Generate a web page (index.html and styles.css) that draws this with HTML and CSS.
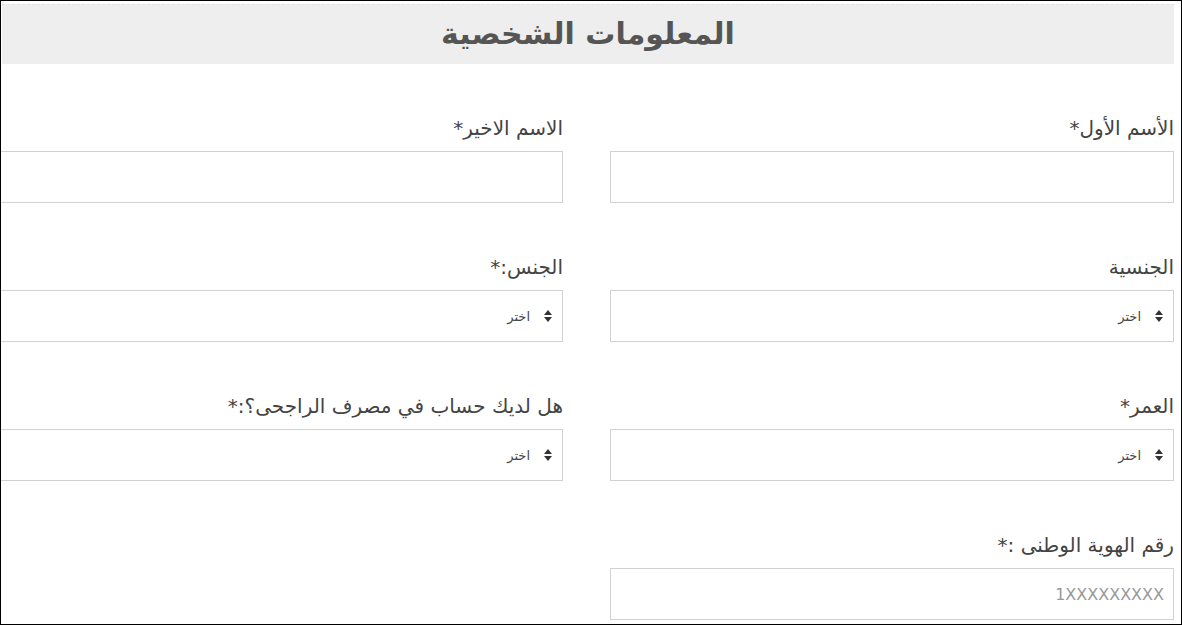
FILE: index.html
```html
<!DOCTYPE html>
<html lang="ar" dir="rtl">
<head>
    <meta charset="UTF-8">
    <title>المعلومات الشخصية</title>
    <link rel="stylesheet" href="styles.css">
</head>
<body>
    <div class="frame">
        <h2 class="section-title">المعلومات الشخصية</h2>

        <form class="fields">
            <div class="field">
                <label>الأسم الأول*</label>
                <input type="text" class="box">
            </div>
            <div class="field">
                <label>الاسم الاخير*</label>
                <input type="text" class="box">
            </div>

            <div class="field">
                <label>الجنسية</label>
                <div class="box select">
                    <svg class="arrows" width="8" height="12" viewBox="0 0 8 12"><path d="M4 0 L8 5 L0 5 Z M4 12 L8 7 L0 7 Z" fill="#333"/></svg>
                    <span>اختر</span>
                </div>
            </div>
            <div class="field">
                <label>الجنس:*</label>
                <div class="box select">
                    <svg class="arrows" width="8" height="12" viewBox="0 0 8 12"><path d="M4 0 L8 5 L0 5 Z M4 12 L8 7 L0 7 Z" fill="#333"/></svg>
                    <span>اختر</span>
                </div>
            </div>

            <div class="field">
                <label>العمر*</label>
                <div class="box select">
                    <svg class="arrows" width="8" height="12" viewBox="0 0 8 12"><path d="M4 0 L8 5 L0 5 Z M4 12 L8 7 L0 7 Z" fill="#333"/></svg>
                    <span>اختر</span>
                </div>
            </div>
            <div class="field">
                <label>هل لديك حساب في مصرف الراجحى؟:*</label>
                <div class="box select">
                    <svg class="arrows" width="8" height="12" viewBox="0 0 8 12"><path d="M4 0 L8 5 L0 5 Z M4 12 L8 7 L0 7 Z" fill="#333"/></svg>
                    <span>اختر</span>
                </div>
            </div>

            <div class="field">
                <label>رقم الهوية الوطنى :*</label>
                <input type="text" class="box" placeholder="1XXXXXXXXX">
            </div>
        </form>
    </div>
</body>
</html>
```

FILE: styles.css
```css
html, body {
    margin: 0;
    padding: 0;
    background: #fff;
}
body {
    font-family: "DejaVu Sans", "Noto Sans", sans-serif;
    color: #333;
}
.frame {
    box-sizing: border-box;
    width: 1182px;
    height: 625px;
    border: 1px solid #000;
    overflow: hidden;
    padding: 3px 7px 0 0;
}
.section-title {
    margin: 0 0 0 1px;
    height: 59px;
    line-height: 58px;
    background-color: #eeeeee;
    border-top: 1px dashed #e2e2e2;
    text-align: center;
    font-size: 30px;
    font-weight: bold;
    color: #555;
}
.fields {
    display: grid;
    grid-template-columns: 564px 564px;
    column-gap: 47px;
    row-gap: 52px;
    width: 1175px;
    padding-top: 52px;
}
.field label {
    display: block;
    height: 24px;
    line-height: 24px;
    font-size: 20px;
    color: #444;
    margin-bottom: 11px;
}
.box {
    box-sizing: border-box;
    display: block;
    width: 100%;
    height: 52px;
    margin: 0;
    border: 1px solid #d2d2d2;
    background: #fff;
    font-family: "DejaVu Sans", "Noto Sans", sans-serif;
    font-size: 16px;
    padding: 0 9px;
    outline: none;
}
.box::placeholder {
    color: #999;
    direction: ltr;
}
.select {
    display: flex;
    align-items: center;
    gap: 14px;
    padding-right: 10px;
}
.select span {
    font-size: 13px;
    color: #444;
}
.arrows {
    flex: none;
}
```
